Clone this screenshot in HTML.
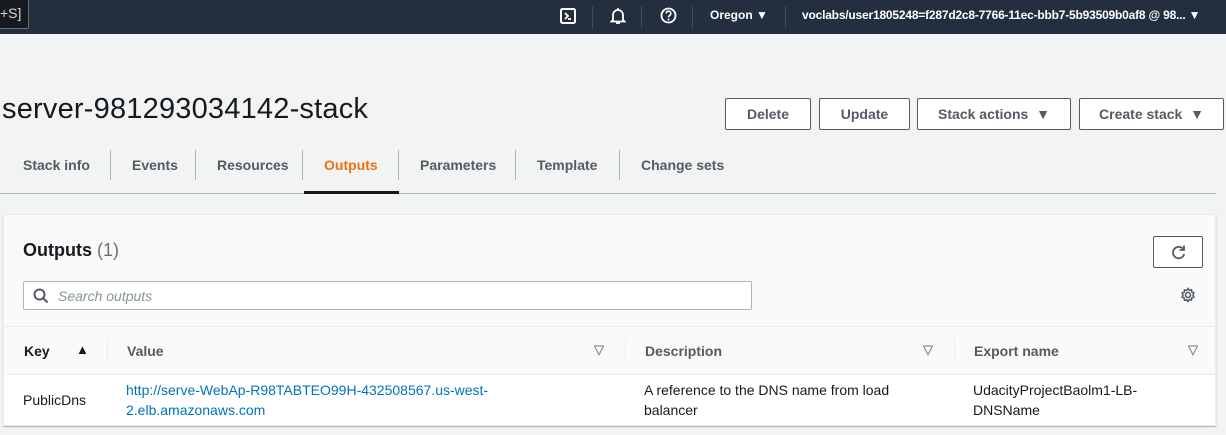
<!DOCTYPE html>
<html><head><style>
*{box-sizing:border-box;margin:0;padding:0}
body{width:1226px;height:435px;overflow:hidden;background:#f2f3f3;font-family:"Liberation Sans",sans-serif;color:#16191f;position:relative}
.top{position:absolute;left:0;top:0;width:1226px;height:34px;background:#232f3e;color:#fff;font-size:12px;font-weight:bold}
.top .k{position:absolute;left:-4px;top:-1px;width:33px;height:30px;border:1px solid #687078;border-radius:2px;color:#d5dbdb;font-size:14px;font-weight:normal;padding:5px 0 0 3px;background:#16191f}
.top span{position:absolute;top:8px}
.sep{position:absolute;top:6px;width:1px;height:22px;background:#414d5c}
h1{position:absolute;left:2px;top:93px;font-size:29px;font-weight:normal;color:#16191f;letter-spacing:0.2px}
.btn{position:absolute;top:98px;height:32px;border:1px solid #545b64;border-radius:2px;background:#fff;font-size:14px;font-weight:bold;color:#545b64;text-align:center;line-height:30px}
.tabs{position:absolute;left:0;top:150px;font-size:14px;font-weight:bold;color:#545b64}
.tabs span{position:absolute;top:7px;white-space:nowrap}
.tb{position:absolute;top:0;width:1px;height:30px;background:#aab7b8}
.line{position:absolute;left:0;top:193px;width:1216px;height:1px;background:#aab7b8}
.ul{position:absolute;left:304px;top:191px;width:95px;height:3px;background:#16191f}
.panel{position:absolute;left:3px;top:214px;width:1213px;height:212px;background:#fafafa;border:1px solid #eaeded;box-shadow:0 1px 1px rgba(0,28,36,.3)}
.th{position:absolute;left:0;top:111px;width:1211px;height:49px;border-top:1px solid #eaeded;border-bottom:1px solid #eaeded;font-size:14px;font-weight:bold;color:#545b64}
.th span{position:absolute;top:16px}
.th i{position:absolute;top:12px;width:1px;height:22px;background:#eaeded}
.row{position:absolute;left:0;top:160px;width:1211px;height:50px;background:#fff;font-size:14px;color:#16191f;line-height:20px}
.row div{position:absolute;top:5px}
.tri{position:absolute;font-size:13px;color:#879596}
</style></head><body>
<div class="top">
<div class="k">+S]</div>
<svg style="position:absolute;left:560px;top:8px" width="16" height="16" viewBox="0 0 16 16"><rect x="1" y="1" width="14" height="14" rx="1.5" fill="none" stroke="#fff" stroke-width="2"/><path d="M5 5l3 3-3 3M8 11h3" fill="none" stroke="#fff" stroke-width="1.8"/></svg>
<div class="sep" style="left:592px"></div>
<svg style="position:absolute;left:610px;top:7px" width="16" height="18" viewBox="0 0 16 18"><path d="M3 13V8a5 5 0 0110 0v5l1.5 1.5h-13z" fill="none" stroke="#fff" stroke-width="1.8"/><path d="M6 16h4" stroke="#fff" stroke-width="1.8"/><circle cx="8" cy="2" r="1" fill="#fff"/></svg>
<div class="sep" style="left:641px"></div>
<svg style="position:absolute;left:660px;top:7px" width="17" height="17" viewBox="0 0 17 17"><circle cx="8.5" cy="8.5" r="7" fill="none" stroke="#fff" stroke-width="1.8"/><path d="M6.2 6.5a2.3 2.3 0 114 1.5c-.8.7-1.7 1-1.7 2.3" fill="none" stroke="#fff" stroke-width="1.6"/><circle cx="8.5" cy="12.5" r="1" fill="#fff"/></svg>
<div class="sep" style="left:692px"></div>
<span style="left:710px">Oregon ▼</span>
<div class="sep" style="left:785px"></div>
<span style="left:802px;letter-spacing:-0.2px">voclabs/user1805248=f287d2c8-7766-11ec-bbb7-5b93509b0af8 @ 98... ▼</span>
</div>
<h1>server-981293034142-stack</h1>
<div class="btn" style="left:725px;width:86px">Delete</div>
<div class="btn" style="left:819px;width:91px">Update</div>
<div class="btn" style="left:917px;width:154px">Stack actions &nbsp;▼</div>
<div class="btn" style="left:1079px;width:145px">Create stack &nbsp;▼</div>
<div class="tabs">
<span style="left:23px">Stack info</span><div class="tb" style="left:110px"></div>
<span style="left:132px">Events</span><div class="tb" style="left:195px"></div>
<span style="left:217px">Resources</span><div class="tb" style="left:302px"></div>
<span style="left:324px;color:#ec7211">Outputs</span><div class="tb" style="left:398px"></div>
<span style="left:420px">Parameters</span><div class="tb" style="left:515px"></div>
<span style="left:537px">Template</span><div class="tb" style="left:619px"></div>
<span style="left:641px">Change sets</span>
</div>
<div class="line"></div><div class="ul"></div>
<div class="panel">
<div style="position:absolute;left:19px;top:25px;font-size:18px;font-weight:bold">Outputs <span style="font-weight:normal;color:#687078">(1)</span></div>
<div style="position:absolute;left:1149px;top:21px;width:50px;height:32px;border:1px solid #545b64;border-radius:2px;background:#fff">
<svg style="position:absolute;left:16px;top:7px" width="17" height="17" viewBox="0 0 17 17"><path d="M13.5 5.5A5.7 5.7 0 1 0 14.2 10" fill="none" stroke="#545b64" stroke-width="1.8"/><path d="M14 1.5v4.5h-4.5" fill="none" stroke="#545b64" stroke-width="1.8"/></svg></div>
<div style="position:absolute;left:19px;top:66px;width:729px;height:29px;border:1px solid #aab7b8;border-radius:2px;background:#fff">
<svg style="position:absolute;left:9px;top:6px" width="16" height="16" viewBox="0 0 16 16"><circle cx="6.5" cy="6.5" r="5" fill="none" stroke="#545b64" stroke-width="2"/><path d="M10 10l4.5 4.5" stroke="#545b64" stroke-width="2"/></svg>
<span style="position:absolute;left:34px;top:6px;font-size:14px;font-style:italic;color:#879596">Search outputs</span></div>
<svg style="position:absolute;left:1176px;top:72px" width="16" height="16" viewBox="0 0 16 16"><circle cx="8" cy="8" r="2.5" fill="none" stroke="#545b64" stroke-width="1.6"/><path d="M8 1.5l1.3 1.8 2.2-.6.3 2.2 2.1 1-1 2 1 2-2.1 1-.3 2.2-2.2-.6L8 14.5l-1.3-1.8-2.2.6-.3-2.2-2.1-1 1-2-1-2 2.1-1 .3-2.2 2.2.6z" fill="none" stroke="#545b64" stroke-width="1.5"/></svg>
<div class="th">
<span style="left:20px;color:#16191f">Key</span><span style="left:72px;color:#16191f;font-size:13px;top:15px">▲</span><i style="left:103px"></i>
<span style="left:123px">Value</span><span class="tri" style="left:590px;top:15px">▽</span><i style="left:621px"></i>
<span style="left:641px">Description</span><span class="tri" style="left:919px;top:15px">▽</span><i style="left:950px"></i>
<span style="left:970px">Export name</span><span class="tri" style="left:1184px;top:15px">▽</span>
</div>
<div class="row">
<div style="left:19px;top:15px">PublicDns</div>
<div style="left:122px;color:#0073bb">http://serve-WebAp-R98TABTEO99H-432508567.us-west-<br>2.elb.amazonaws.com</div>
<div style="left:640px">A reference to the DNS name from load<br>balancer</div>
<div style="left:969px">UdacityProjectBaolm1-LB-<br>DNSName</div>
</div>
</div>
</body></html>
